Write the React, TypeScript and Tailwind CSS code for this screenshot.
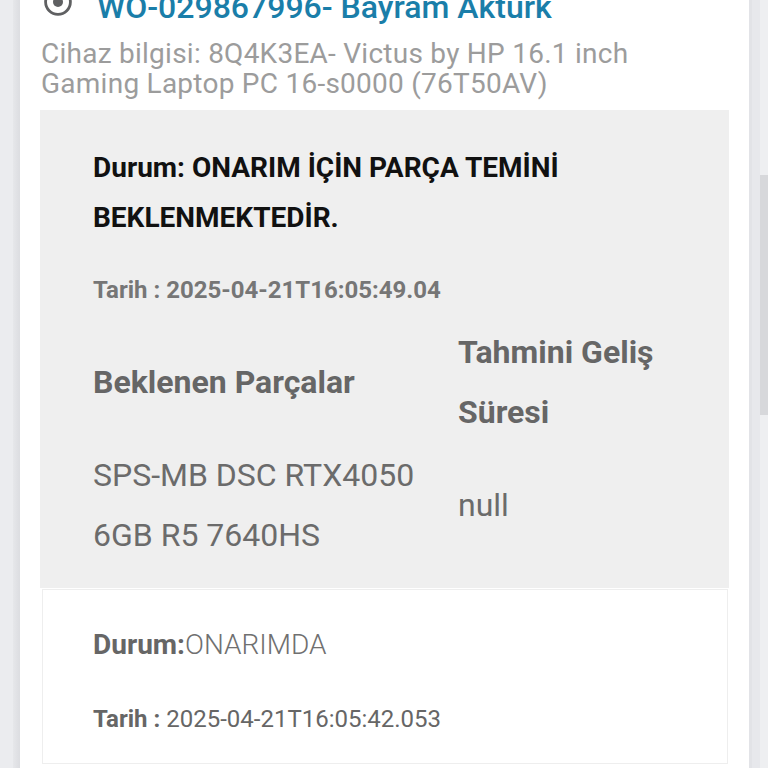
import React from "react";

export default function App() {
  const font = { fontFamily: "Roboto, 'Liberation Sans', sans-serif" };
  return (
    <div className="w-[768px] h-[768px] overflow-hidden bg-[#eaebee] flex relative" style={font}>
      {/* left gutter */}
      <div className="w-[20px] shrink-0 flex">
        <div className="w-[13px] bg-[#ebecef]" />
        <div className="w-[7px] bg-gradient-to-r from-[#e6e7ea] to-[#dcdde1]" />
      </div>
      {/* card */}
      <div className="w-[729px] shrink-0 bg-white flex flex-col">
        <div className="-mt-[10px] flex flex-col">
          {/* title */}
          <div className="flex items-center h-[35px] pl-[23px]">
            <svg width="30" height="30" viewBox="0 0 30 30" className="shrink-0 -mt-[12px]">
              <circle cx="15" cy="15" r="12.4" fill="none" stroke="#5f6062" strokeWidth="2.8" />
              <circle cx="15" cy="15" r="5" fill="#5f6062" />
            </svg>
            <span className="ml-[24px] text-[32px] leading-[35px] font-medium text-[#1a7ea9] whitespace-nowrap">
              WO-029867996- Bayram Akturk
            </span>
          </div>
          {/* device info */}
          <div className="mt-[14px] pl-[21px] pr-[10px] text-[28px] leading-[30px] tracking-[0.25px] text-[#9c9c9c] whitespace-nowrap">
            Cihaz bilgisi: 8Q4K3EA- Victus by HP 16.1 inch
            <br />
            Gaming Laptop PC 16-s0000 (76T50AV)
          </div>
          {/* gray status box */}
          <div className="mt-[11px] mx-[20px] bg-[#efefef] pl-[53px] pr-[40px] pt-[33px] pb-[23px]">
            <div className="text-[28px] leading-[50px] font-bold text-[#111111] whitespace-nowrap">
              Durum: ONARIM İÇİN PARÇA TEMİNİ
              <br />
              BEKLENMEKTEDİR.
            </div>
            <div className="mt-[32px] text-[24px] leading-[30px] font-bold text-[#767676]">
              Tarih : 2025-04-21T16:05:49.04
            </div>
            <div className="mt-[17px] flex flex-col gap-[3px]">
              <div className="flex items-center">
                <div className="w-[365px] text-[32px] leading-[60px] font-bold text-[#666666]">
                  Beklenen Parçalar
                </div>
                <div className="w-[230px] text-[32px] leading-[60px] font-bold text-[#666666] whitespace-nowrap">
                  Tahmini Geliş
                  <br />
                  Süresi
                </div>
              </div>
              <div className="flex items-center">
                <div className="w-[365px] text-[32px] leading-[60px] text-[#6b6b6b] whitespace-nowrap">
                  SPS-MB DSC RTX4050
                  <br />
                  6GB R5 7640HS
                </div>
                <div className="w-[230px] text-[32px] leading-[60px] text-[#6b6b6b]">null</div>
              </div>
            </div>
          </div>
          {/* white status card */}
          <div className="mt-[1px] ml-[22px] mr-[21px] border border-[#eeeeee] bg-white pl-[50px] pt-[40px] pb-[29px]">
            <div className="text-[28px] leading-[30px] text-[#666666]">
              <span className="font-bold">Durum:</span>
              <span className="font-light text-[#707070]">ONARIMDA</span>
            </div>
            <div className="mt-[44px] text-[24px] leading-[30px] text-[#666666]">
              <span className="font-bold">Tarih : </span>
              <span>2025-04-21T16:05:42.053</span>
            </div>
          </div>
        </div>
      </div>
      {/* right gutter with scrollbar */}
      <div className="flex-1 flex relative">
        <div className="w-[3px] bg-[#e2e3e7]" />
        <div className="w-[8px] bg-[#e7e8ec]" />
        <div className="flex-1 bg-[#eeeff1]" />
        <div className="absolute right-0 top-[175px] w-[8px] h-[240px] bg-[#d7d8db]" />
      </div>
    </div>
  );
}
